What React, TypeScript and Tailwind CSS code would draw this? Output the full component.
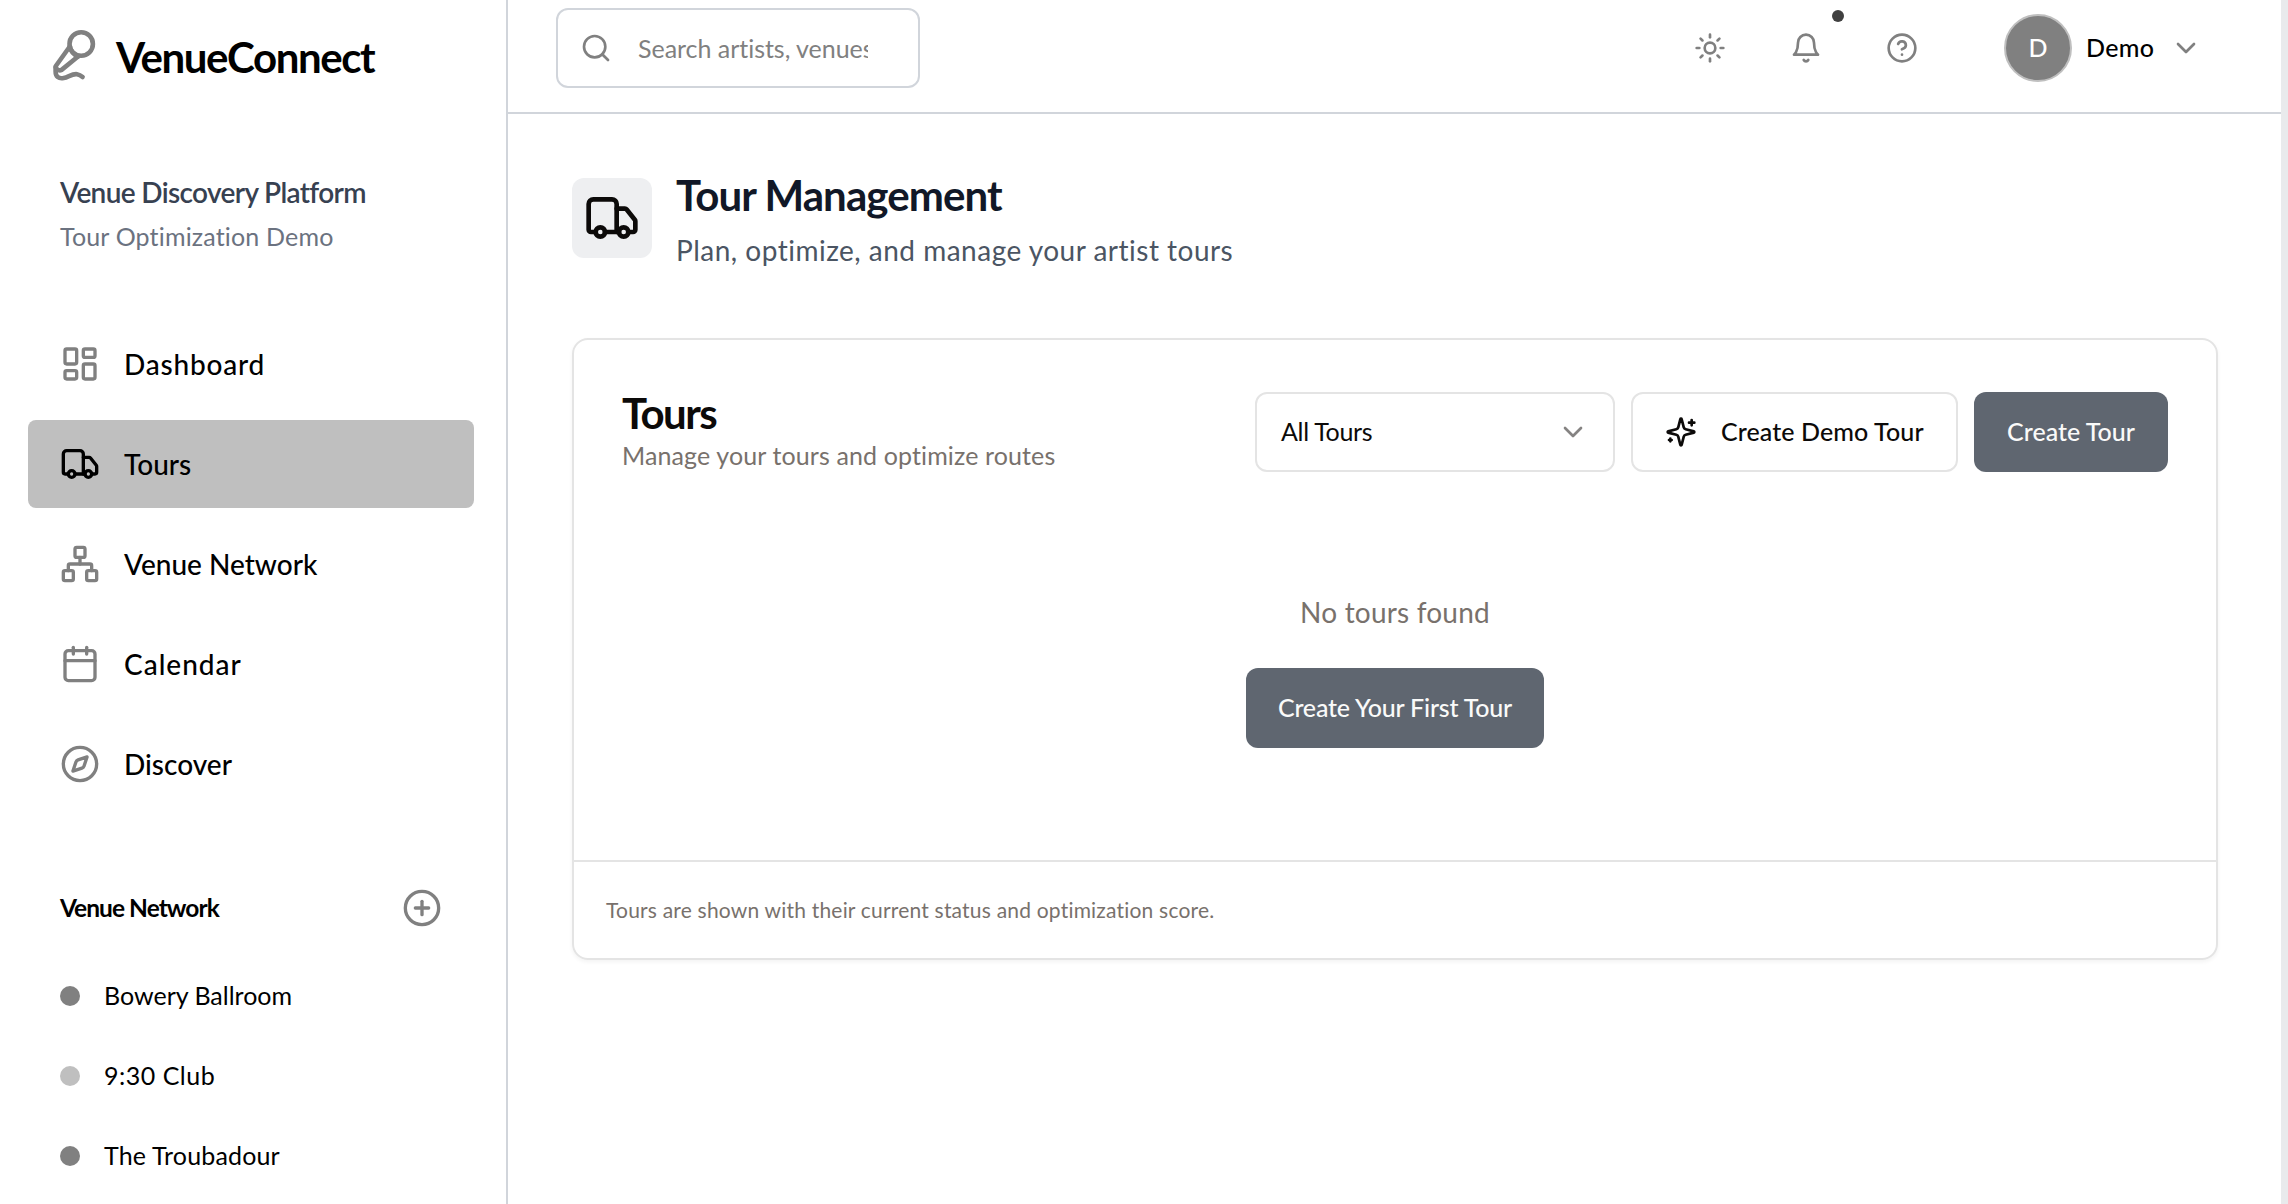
import React from "react";
import { Search, Sun, ChevronDown, Truck, LayoutDashboard, Network, Calendar, Compass, PlusCircle, CircleHelp } from "lucide-react";

const navItems = [
  { label: "Dashboard", icon: LayoutDashboard, tracking: "tracking-[0.8px]" },
  { label: "Tours", icon: Truck, tracking: "tracking-[0px]", active: true },
  { label: "Venue Network", icon: Network, tracking: "tracking-[0px]" },
  { label: "Calendar", icon: Calendar, tracking: "tracking-[1px]" },
  { label: "Discover", icon: Compass, tracking: "tracking-[0px]" },
];

const venues = [
  { name: "Bowery Ballroom", dot: "bg-[#808080]", tracking: "tracking-[0px]" },
  { name: "9:30 Club", dot: "bg-[#bfbfbf]", tracking: "tracking-[0.5px]" },
  { name: "The Troubadour", dot: "bg-[#808080]", tracking: "tracking-[0.15px]" },
];

function MicLogo() {
  return (
    <svg className="h-[56px] w-[48px]" viewBox="0 0 48 56" fill="none" stroke="#808080" strokeWidth="4.600" strokeLinecap="round" strokeLinejoin="round">
      <circle cx="33.200" cy="15" r="11.700" />
      <path d="M21.800 17.500 8.200 36.500q-1.200 2 0.800 3.600 2.200 2 4.600 0.800L30 27.500" />
      <path d="M21.800 17.500q1.500 7 8.200 10" />
      <path d="M7.600 38v4.500c0 5 3 7.600 8 6.600s8.400-4.600 13.400-3.900q3 .5 5.600 2.800" />
    </svg>
  );
}

function Bell() {
  return (
    <svg className="size-8" viewBox="0 0 24 24" fill="none" stroke="currentColor" strokeWidth="2" strokeLinecap="round" strokeLinejoin="round">
      <path d="M6 8a6 6 0 0 1 12 0c0 7 3 9 3 9H3s3-2 3-9" />
      <path d="M10.300 21a1.940 1.940 0 0 0 3.400 0" />
    </svg>
  );
}

function Sparkles() {
  return (
    <svg className="size-8" viewBox="0 0 24 24" fill="none" stroke="currentColor" strokeWidth="2" strokeLinecap="round" strokeLinejoin="round">
      <path d="M9.937 15.500A2 2 0 0 0 8.500 14.063l-6.135-1.582a.5.5 0 0 1 0-.962L8.500 9.936A2 2 0 0 0 9.937 8.500l1.582-6.135a.5.5 0 0 1 .963 0L14.063 8.500A2 2 0 0 0 15.500 9.937l6.135 1.581a.5.5 0 0 1 0 .964L15.500 14.063a2 2 0 0 0-1.437 1.437l-1.582 6.135a.5.5 0 0 1-.963 0z" />
      <path d="M20 3v4M22 5h-4M4 17v2M5 18H3" />
    </svg>
  );
}

function Sidebar() {
  return (
    <aside className="flex w-[508px] shrink-0 flex-col border-r-2 border-[#d1d5db]">
      <div className="flex h-[114px] items-center gap-[20px] pl-[48px]">
        <MicLogo />
        <span className="text-[42px] font-bold tracking-[-1.4px] text-black">VenueConnect</span>
      </div>
      <div className="flex h-[200px] flex-col pt-[58px] pl-[60px]">
        <span className="text-[28px] leading-[40px] font-semibold tracking-[-0.65px] text-[#374151]">Venue Discovery Platform</span>
        <span className="mt-[6px] text-[25px] leading-[36px] tracking-[0.17px] text-[#6b7280]">Tour Optimization Demo</span>
      </div>
      <nav className="mt-[6px] flex flex-col gap-3 px-[28px]">
        {navItems.map(({ label, icon: Icon, active, tracking }) => (
          <a key={label} className={`flex h-[88px] w-[446px] items-center gap-6 rounded-[8px] pl-8 ${active ? "bg-[#bfbfbf]" : ""}`}>
            <Icon className={`size-10 ${active ? "text-black" : "text-[#808080]"}`} strokeWidth={2} />
            <span className={`pb-px text-[28px] font-medium text-black ${tracking}`}>{label}</span>
          </a>
        ))}
      </nav>
      <div className="mt-[76px] flex h-[48px] items-center justify-between pr-[64px] pl-[60px]">
        <h3 className="text-[24.5px] font-bold tracking-[-0.95px] text-black">Venue Network</h3>
        <PlusCircle className="size-10 text-[#808080]" />
      </div>
      <ul className="mt-[24px] flex flex-col pl-[60px]">
        {venues.map((v) => (
          <li key={v.name} className="flex h-20 items-center gap-6">
            <span className={`size-5 rounded-full ${v.dot}`} />
            <span className={`text-[25px] text-black ${v.tracking}`}>{v.name}</span>
          </li>
        ))}
      </ul>
    </aside>
  );
}

function Header() {
  return (
    <header className="flex h-[114px] shrink-0 items-start justify-between border-b-2 border-[#d1d5db] pr-[79px] pl-[48px]">
      <div className="mt-[8px] flex h-20 w-[364px] items-center rounded-[12px] border-2 border-[#d1d5db] pr-[50px] pl-[22px]">
        <Search className="size-8 shrink-0 text-[#808080]" />
        <span className="ml-[26px] overflow-hidden pt-[2px] text-[25px] tracking-[-0.03px] whitespace-nowrap text-[#808080]">Search artists, venues</span>
      </div>
      <div className="flex h-24 items-center text-[#808080]">
        <Sun className="size-8" />
        <div className="relative ml-16">
          <Bell />
          <span className="absolute -top-[22px] left-[42px] size-3 rounded-full bg-[#404040]" />
        </div>
        <CircleHelp className="ml-16 size-8" />
        <div className="ml-[86px] flex size-[68px] items-center justify-center rounded-full border-2 border-[#bfbfbf] bg-[#808080] text-[25px] font-medium text-white">D</div>
        <span className="ml-[14px] w-[84px] text-[25px] font-medium tracking-[0.3px] text-black">Demo</span>
        <ChevronDown className="size-8" />
      </div>
    </header>
  );
}

function ToursCard() {
  return (
    <section className="flex h-[622px] flex-col rounded-[16px] border-2 border-[#e4e4e4] shadow-[0_2px_4px_rgba(0,0,0,0.05)]">
      <div className="flex items-start justify-between pt-[52px] pr-[48px] pl-[48px]">
        <div className="-mt-px flex flex-col">
          <h2 className="text-[42px] leading-[44px] font-bold tracking-[-1.600px] text-[#0c0a09]">Tours</h2>
          <p className="mt-[2px] text-[25px] leading-[36px] tracking-[0.12px] text-[#78716c]">Manage your tours and optimize routes</p>
        </div>
        <div className="flex gap-4">
          <div className="flex h-20 w-[360px] items-center justify-between rounded-[12px] border-2 border-[#e4e4e4] px-[24px]">
            <span className="text-[25px] tracking-[-0.3px] text-[#0c0a09]">All Tours</span>
            <ChevronDown className="size-8 text-[#858382]" />
          </div>
          <button className="flex h-20 w-[327px] items-center gap-6 rounded-[12px] border-2 border-[#e4e4e4] pl-[32px] text-[#0c0a09]">
            <Sparkles />
            <span className="text-[25px] font-medium tracking-[0.1px] whitespace-nowrap">Create Demo Tour</span>
          </button>
          <button className="flex h-20 w-[194px] items-center justify-center rounded-[12px] bg-[#5f6670] text-[25px] font-medium text-[#fafaf9]">Create Tour</button>
        </div>
      </div>
      <div className="flex flex-1 flex-col items-center pt-[115px]">
        <p className="text-[28px] leading-[48px] tracking-[0.2px] text-[#78716c]">No tours found</p>
        <button className="mt-[32px] h-20 w-[298px] rounded-[12px] bg-[#5f6670] text-[25px] font-medium tracking-[-0.2px] text-[#fafaf9]">Create Your First Tour</button>
      </div>
      <div className="flex h-[98px] items-center border-t-2 border-[#e4e4e4] pl-[32px] text-[21px] tracking-[0.2px] text-[#78716c]">
        <span>Tours are shown with their current status and optimization score.</span>
      </div>
    </section>
  );
}

export default function App() {
  return (
    <div className="flex h-[1204px] w-[2288px] overflow-hidden bg-white font-['Lato',sans-serif] [font-variant-ligatures:none]">
      <Sidebar />
      <div className="flex flex-1 flex-col">
        <Header />
        <main className="flex flex-col pt-[64px] pr-[63px] pl-[64px]">
          <div className="mb-[68px] flex h-[92px] gap-6">
            <div className="flex size-20 items-center justify-center rounded-[12px] bg-[#eeeff1]">
              <Truck className="size-14 text-[#0c0a09]" />
            </div>
            <div className="-mt-[3px] flex flex-col">
              <h1 className="text-[42px] leading-[40px] font-bold tracking-[-0.9px] text-[#111827]">Tour Management</h1>
              <p className="mt-[15px] text-[28px] leading-[40px] tracking-[0.49px] text-[#4b5563]">Plan, optimize, and manage your artist tours</p>
            </div>
          </div>
          <ToursCard />
        </main>
      </div>
      <div className="w-[7px] shrink-0 bg-[#e9eaec]" />
    </div>
  );
}
